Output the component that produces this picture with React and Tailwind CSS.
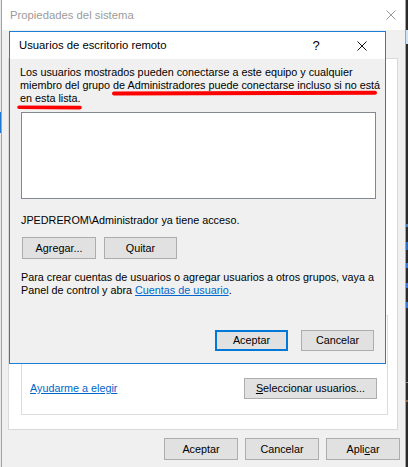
export default function App() {
  const btn =
    "flex items-center justify-center bg-[#e1e1e1] border border-[#adadad] text-black";
  return (
    <div className="relative w-[408px] h-[467px] overflow-hidden bg-[#2b2b2b] flex font-['Liberation_Sans',Arial,sans-serif] text-[10.8px] leading-[13px] text-black">
      {/* left 1px column */}
      <div className="w-[1px] h-full bg-[#e8e8e8] flex flex-col">
        <div className="h-[112px]" />
        <div className="h-[21px] bg-[#1e78d2]" />
      </div>

      {/* back window */}
      <div className="w-[405px] h-full flex flex-col border-x border-[#a3a3a3] bg-[#f0f0f0] shrink-0">
        <div className="h-[30px] bg-white flex items-center justify-between pl-[8px] pr-[8px] shrink-0">
          <span className="text-[11.3px] text-[#9b9b9b]">Propiedades del sistema</span>
          <svg width="10" height="10" viewBox="0 0 10 10" className="mr-[1px]">
            <path d="M0.5 0.5 L9.5 9.5 M9.5 0.5 L0.5 9.5" stroke="#9a9a9a" strokeWidth="1" fill="none" />
          </svg>
        </div>
        <div className="flex flex-col">
          <div className="mt-[28px] ml-[6px] mr-[7px] h-[372px] border border-[#d9d9d9] bg-white flex flex-col justify-end pl-[12px] pr-[9px] pb-[14px]">
            <div className="h-[100px] border border-[#dcdcdc] flex items-end justify-between pl-[8px] pr-[10px] pb-[15px]">
              <span className="text-[#0066cc] underline mb-[4px]">Ayudarme a elegir</span>
              <div className={btn + " w-[133px] h-[21px]"}>
                <span>
                  <span className="underline">S</span>eleccionar usuarios...
                </span>
              </div>
            </div>
          </div>
          <div className="mt-[8px] flex justify-end gap-[7px] pr-[5px]">
            <div className={btn + " w-[74px] h-[22px]"}>Aceptar</div>
            <div className={btn + " w-[74px] h-[22px]"}>Cancelar</div>
            <div className={btn + " w-[74px] h-[22px]"}>
              <span>
                Apli<span className="underline">c</span>ar
              </span>
            </div>
          </div>
        </div>
      </div>

      {/* desktop fragments at right edge */}
      <div className="absolute left-[406px] top-[30px] w-[2px] h-[14px] bg-[#cfe3f5]" />
      <div className="absolute left-[406px] top-[224px] w-[2px] h-[3px] bg-[#4a7fc0]" />
      <div className="absolute left-[406px] top-[242px] w-[2px] h-[8px] bg-[#2f6fc0]" />
      <div className="absolute left-[406px] top-[263px] w-[2px] h-[5px] bg-[#3b7ad0]" />
      <div className="absolute left-[406px] top-[283px] w-[2px] h-[5px] bg-[#3b7ad0]" />
      <div className="absolute left-[406px] top-[302px] w-[2px] h-[6px] bg-[#3b7ad0]" />
      <div className="absolute left-[406px] top-[382px] w-[2px] h-[1px] bg-[#8a8a8a]" />
      <div className="absolute left-[406px] top-[400px] w-[2px] h-[2px] bg-[#8a6a50]" />

      {/* front dialog */}
      <div className="absolute left-[9px] top-[31px] w-[377px] h-[333px] border border-[#1c7ed6] bg-[#f0f0f0] flex flex-col">
        <div className="h-[27px] bg-white flex items-center justify-between pl-[9px] shrink-0">
          <span className="text-[11.3px] text-black">Usuarios de escritorio remoto</span>
          <div className="flex">
            <div className="w-[46px] h-[27px] flex items-center justify-center text-[13px] pb-[1px]">?</div>
            <div className="w-[46px] h-[27px] flex items-center justify-center">
              <svg width="10" height="10" viewBox="0 0 10 10">
                <path d="M0.5 0.5 L9.5 9.5 M9.5 0.5 L0.5 9.5" stroke="#111" strokeWidth="1" fill="none" />
              </svg>
            </div>
          </div>
        </div>
        <div className="relative flex-1 flex flex-col pl-[11px] pr-[9px] pt-[7px] pb-[12px]">
          <div className="whitespace-nowrap -ml-[1px]">
            Los usuarios mostrados pueden conectarse a este equipo y cualquier
            <br />
            miembro del grupo de Administradores puede conectarse incluso si no está
            <br />
            en esta lista.
          </div>
          <div className="mt-[7px] h-[87px] bg-white border border-[#828790]" />
          <div className="mt-[15px] whitespace-nowrap">JPEDREROM\Administrador ya tiene acceso.</div>
          <div className="mt-[10px] flex gap-[8px] pl-[1px]">
            <div className={btn + " w-[74px] h-[22px]"}>Agregar...</div>
            <div className={btn + " w-[73px] h-[22px]"}>Quitar</div>
          </div>
          <div className="mt-[12px] whitespace-nowrap">
            Para crear cuentas de usuarios o agregar usuarios a otros grupos, vaya a
            <br />
            Panel de control y abra <span className="text-[#0066cc] underline">Cuentas de usuario</span>.
          </div>
          <div className="mt-auto flex justify-end gap-[13px] pr-[2px]">
            <div className="w-[73px] h-[21px] flex items-center justify-center bg-[#e1e1e1] border-2 border-[#0078d7]">
              Aceptar
            </div>
            <div className={btn + " w-[73px] h-[21px]"}>Cancelar</div>
          </div>
          <svg
            className="absolute left-0 top-0 pointer-events-none"
            width="375"
            height="60"
            viewBox="0 0 375 60"
          >
            <path d="M104 34.5 L365 33.8" stroke="#ff0000" strokeWidth="4" strokeLinecap="round" fill="none" />
            <path d="M9 48.3 L70 48.6" stroke="#ff0000" strokeWidth="3.6" strokeLinecap="round" fill="none" />
          </svg>
        </div>
      </div>
    </div>
  );
}
